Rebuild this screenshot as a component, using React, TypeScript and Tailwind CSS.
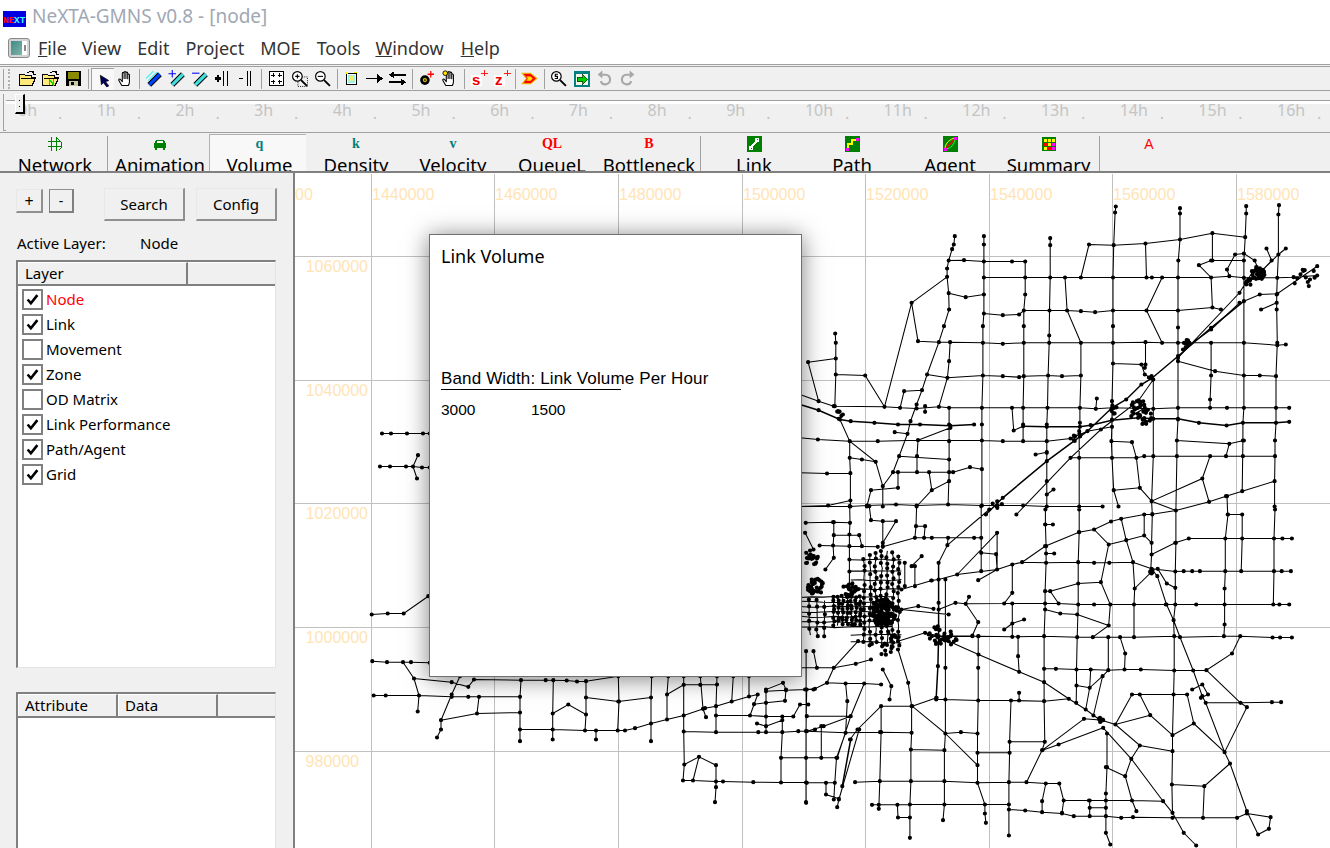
import React from "react";

type Pt = [number, number];
const T7 = (x: number, y: number): Pt => [800 + x / 2.958, 175 + y / 3];
const T8 = (x: number, y: number): Pt => [800 + x / 2.958, 510 + y / 3];
const T9 = (x: number, y: number): Pt => [295 + x / 3, 600 + y / 3];
const T10 = (x: number, y: number): Pt => [295 + x / 3, 175 + y / 3];

const A7 = [
  "458,185 455,210 450,224 440,258 435,282 435,307 440,356 441,405 426,455 411,503 376,600 361,647 345,690 327,740 318,778 293,845 275,893 245,935",
  "440,258 485,257 544,261 627,261 666,261",
  "544,185 544,210 544,261 544,309 544,360 544,417 541,455 541,505 541,603 538,700 538,750 538,798 538,884 538,993",
  "934,96 932,114 928,212 926,309 926,408 926,455 926,505 926,567 923,680 923,735 921,800 923,850 928,947 942,996",
  "1124,101 1124,117 1124,195 1119,258 1118,309 1118,408 1118,459 1118,545 1118,700 1118,735 1115,798 1115,845 1112,1008",
  "1320,95 1320,117 1317,188 1313,258 1313,310 1313,380 1313,505 1313,603 1313,700 1310,745 1310,798 1308,950",
  "1417,92 1415,120 1415,240 1412,310 1410,360 1410,405 1412,505 1408,605 1408,700 1408,745 1405,798 1405,845 1404,920 1404,996",
  "740,191 740,212 740,309 738,408 737,483 737,505 734,603 732,700 730,750 730,800 730,835 730,920 730,996",
  "666,261 666,309 666,360 662,408 662,455 662,505 662,605 660,700 660,750 660,800",
  "831,505 831,603 828,700 828,745 826,770 826,850 826,996",
  "1220,176 1220,258", "1022,207 1025,309",
  "855,210 928,212 1022,207 1124,195 1220,176 1317,188",
  "855,210 831,309",
  "544,309 666,309 740,309 784,309 831,309 926,309 1025,309 1041,309 1071,309 1118,309 1216,309 1270,305 1313,310 1412,310 1460,308 1530,303",
  "544,417 600,422 648,420 662,408 738,408 790,408 831,410 873,413 926,408 1025,408 1118,408 1220,399 1245,405",
  "784,309 790,408 831,505", "1071,309 1025,408 1071,505", "1216,309 1220,399",
  "349,500 411,503 444,503 541,505 600,508 662,505 737,505 831,505 926,505 1022,503 1071,505 1118,505 1216,505 1313,505 1412,512 1437,510",
  "1022,503 1022,570 1020,580", "926,567 1010,570 1020,600 1045,615",
  "444,503 441,560 436,610 411,697",
  "376,600 436,610 541,603 600,605 648,608 662,605 734,603 775,605 831,603",
  "1216,505 1216,603 1213,675 1213,700",
  "1118,560 1228,590 1313,603 1360,603 1408,605",
  "250,697 296,700 345,702 411,697 441,700 538,700 627,700 660,700 732,700 828,700 875,703 923,700 1045,703 1118,700 1213,700 1263,700 1313,700 1408,700 1447,700",
  "0,660 55,680 100,695 250,697",
  "104,477 106,505 106,552 106,600 103,695",
  "24,563 106,552", "24,563 55,680",
  "106,600 193,603 250,697", "250,697 330,385 349,500", "330,385 435,307", "440,356 490,368 544,360",
  "308,650 361,647", "308,650 296,700",
  "118,735 147,800 224,862 245,935", "147,800 147,850 149,896 149,978 149,996",
  "0,790 53,795 147,800 230,800 349,797 445,760",
  "349,797 538,798 600,800 660,800 730,800 800,792 850,770 923,757",
  "349,797 346,845 346,893", "293,845 441,855", "147,850 183,855 224,862", "0,895 80,897 149,896",
  "275,893 346,893 382,893 441,893 453,893 503,878 538,884",
  "290,893 290,940 210,947 198,996", "382,893 390,947 441,920 441,855", "390,947 345,996",
  "441,700 441,750 441,800 441,855 441,893 438,990",
  "0,996 83,993 149,978", "0,996 147,996 198,993 284,990 345,993 438,990 538,993 660,993 730,996 826,996 895,996",
  "245,935 245,996",
  "640,1020 800,850 890,765 1000,680 1045,615",
  "1133,525 1216,465 1300,385", "1118,550 1300,355 1340,290",
  "800,850 923,850 995,850 1018,845 1045,845 1115,845 1213,845 1260,845 1310,845 1405,845",
  "1115,798 1270,808 1260,845", "1270,808 1313,798",
  "921,800 982,803 995,850 1005,940", "1045,615 1045,703 1045,733 1045,845 1040,980 1042,1020",
  "928,947 1005,940 1040,980 1190,912 1213,845", "1190,912 1210,982",
  "1040,980 1112,1008 1210,982 1260,965 1308,950 1404,920", "1263,965 1265,1020",
  "697,840 730,833", "730,960 750,945", "632,768 660,755", "627,700 632,768", "280,773 318,778",
  "1364,405 1410,385", "1287,240 1313,237 1345,258 1360,295", "1180,272 1216,258 1313,258", "1180,272 1216,309",
  "1287,240 1263,285 1270,305", "1380,222 1395,258 1360,295 1415,240 1437,222", "1360,295 1320,330",
  "878,672 875,703", "370,695 370,712", "1000,680 1020,700 980,725",
  "1313,380 1360,360 1412,358 1530,275",
];
const T7H = [
  "0,690 55,707 118,735 150,740 220,745 290,750 355,750 445,754 515,750",
  "660,755 730,757 828,757 860,752 923,737 1000,730 1045,733 1118,733 1180,745 1262,753 1310,745 1408,745 1447,742",
  "550,1020 600,970 730,860 850,770 923,700 965,675 1010,630 1040,612 1118,545 1216,460 1313,380",
];
const A8 = [
  "147,-10 148,40 146,75 146,110 146,150 146,186 146,240", "17,40 98,38 148,40", "15,70 40,120",
  "100,38 100,77 98,108 100,145 75,180", "100,77 175,77 183,110", "58,108 146,110 230,112",
  "245,112 340,85 390,85 438,85 515,85 536,85", "205,-10 210,32 245,35 284,35 245,100", "245,35 245,110",
  "345,-10 343,50 340,85", "343,50 370,50 367,85", "438,85 436,107 410,160", "436,107 560,0",
  "536,-10 536,85 536,130 536,185", "536,130 580,134 583,180", "583,70 583,180 465,195 410,210 388,213", "583,70 465,195",
  "583,180 628,165 657,158 728,160 823,158 870,160 915,160 985,158 1040,178 1110,186 1135,185 1160,185 1183,185 1258,185 1305,185 1402,185 1425,185 1452,185",
  "527,212 583,180", "657,158 725,110 825,68 870,60 920,36 950,28 1018,15 1042,14 1112,3",
  "726,0 726,45 728,110 728,160 725,245 725,300 722,380 722,478 722,575 724,697 716,722 670,818",
  "725,45 748,45", "728,132 752,132", "826,0 826,68 823,158 823,222 823,285 820,383 818,480 818,528 817,580",
  "870,60 913,105 890,218 918,285 913,348 866,383", "913,105 965,92 1018,78 1040,100 1040,135 1037,190 990,237 988,285 988,383",
  "950,28 965,92 985,158 990,237", "1040,135 1110,100 1150,87 1258,87 1308,87 1402,87 1427,87 1455,87",
  "1112,3 1112,100 1110,186 1110,235 1110,285 1105,332 1107,380 1107,483 1102,677 1102,725 1100,825 1102,910",
  "1018,15 1018,78", "1042,14 1040,100", "1266,15 1258,87 1258,185 1256,237 1256,285 1256,345 1254,380",
  "1266,15 1308,15 1308,87 1305,185", "1405,0 1402,87 1402,185 1400,285",
  "628,165 628,250 604,282 628,282 628,342 628,382", "628,342 663,330", "604,360 628,342", "490,283 500,262",
  "410,300 460,280 490,283 604,282 725,282 765,282 823,285 870,285 918,285 988,285 1082,285 1110,285 1172,285 1256,285 1400,285 1418,285 1447,285",
  "490,283 527,338 510,378", "725,300 770,312 820,315 913,348", "740,245 823,222 890,218", "740,245 765,282", "725,245 740,245", "300,300 440,315",
  "510,380 528,380 628,382 722,380 820,383 866,383 912,383 947,383 988,383 1107,380 1124,383 1254,380 1302,380 1398,384 1420,384 1455,384",
  "1302,380 1278,432 1202,482 1163,483 1107,483 1008,480 960,480 912,482 860,480 818,480 757,478 722,478",
  "947,383 962,432 960,480", "645,382 645,440 648,487",
  "440,395 528,435 648,487 722,518 795,568 845,600 885,630 933,645 1005,708 1102,725",
  "1040,178 1057,200 1084,285 1105,332 1124,383 1163,483 1190,560 1200,580 1256,728 1272,762 1322,905 1355,975 1387,958 1392,923 1322,912",
  "1102,677 1036,617 1005,555 982,555 933,645 1036,617", "1005,555 1105,555 1145,555 1165,642 1102,677",
  "1165,642 1256,728 1322,593 1303,580 1200,580", "1303,580 1396,578 1423,578", "1202,482 1303,580",
  "1272,762 1196,830 1100,825", "1196,830 1192,925", "980,748 1005,708", "897,655 980,748 1074,875 1102,910 1135,970 1172,1008",
  "980,748 962,800 905,773", "962,800 982,873 995,905", "780,873 855,873 905,873 982,873 1074,875", "840,628 897,632",
  "717,722 840,628", "717,722 765,705 897,655", "908,672 908,773 905,852 905,920 905,970 918,1005",
  "912,383 912,482 895,500 868,618", "860,480 857,535 845,600", "818,528 857,535 895,500",
  "527,380 527,475 527,573 525,672 525,730 525,767 525,820 547,885 547,912 550,940",
  "430,210 430,475 430,570 430,672 427,722 427,815 427,885 423,932",
  "403,570 430,570 527,573 624,573 722,575 795,568", "648,550 648,573", "624,573 620,697 620,730 618,818 618,885 618,978",
  "620,697 724,697", "525,730 620,730", "525,672 476,668 430,672 332,590 240,590 240,668 236,815 233,898", "332,590 404,565",
  "330,590 330,670 328,720 328,815 325,885 325,985", "237,668 330,670", "328,720 427,722", "430,672 525,767",
  "163,818 236,815 328,815 427,815 525,820 618,818 670,818 727,822 767,822 780,873 775,910", "727,822 716,875 716,908",
  "213,886 233,886 288,886 325,885 427,885 547,885 618,885", "288,886 290,924 325,924",
  "618,900 666,903 716,908 775,912 810,920 857,920 905,920 950,925 985,923 1102,925 1192,925 1293,925 1322,912",
  "857,873 857,920", "857,895 905,895", "0,475 50,475 100,475 165,463 210,450", "100,475 80,520 40,540 15,540",
  "80,520 135,522 190,522 240,525", "135,522 140,575 135,670 108,745 103,820 100,870", "190,522 150,620 110,745",
  "240,590 170,660 148,690", "175,660 115,870 110,893", "20,620 150,620", "20,665 70,650 150,620", "20,665 135,670 240,668",
  "18,745 63,745 108,745", "63,650 63,745", "20,820 77,820 103,820", "77,820 77,855 115,868", "18,425 18,880", "40,425 50,475",
  "172,395 100,475", "330,590 320,520 290,420", "265,570 270,530 245,480", "1160,540 1190,525 1207,555 1186,565", "1058,178 1085,222 1110,235",
  "300,240 390,213", "300,300 350,290 395,298", "290,395 370,370 430,385", "330,170 360,140", "310,160 310,230", "340,170 340,230",
];
const T8H = ["410,160 410,210 410,280 410,380 408,470 403,565", "150,690 125,830", "390,380 510,380"];
const A9 = [
  "230,45 278,42 326,42 400,-10", "232,185 276,188 324,188 348,188 404,190",
  "324,188 357,237 470,248 520,262 537,240 678,242 752,242 815,243 846,246 873,245 970,230",
  "357,237 372,288 368,336", "236,288 272,288 372,288 470,292 520,292 552,292 675,292", "552,292 546,342",
  "438,362 546,342 675,339", "438,362 438,390 426,414", "438,362 470,285 495,230", "678,242 675,292 675,390 675,425",
  "675,390 773,390 870,393 903,393 968,393 990,393 1020,386 1068,372 1116,360 1166,348 1230,326 1263,320 1310,306 1362,291 1388,285",
  "775,242 773,342 773,420", "773,342 820,315 873,345", "873,245 873,294 873,345 870,393", "873,294 970,306 1068,294",
  "970,230 972,306 968,393", "1070,230 1068,294 1068,372 1068,425", "903,393 903,420", "1120,230 1116,285 1166,256 1216,256 1266,255",
  "1116,285 1116,360", "1166,230 1166,348 1166,396 1168,495 1164,543 1194,543 1263,546 1284,546 1375,548 1458,549 1533,549",
  "1168,495 1212,472 1263,497 1263,546 1263,563 1260,608", "1212,472 1194,543", "1216,230 1224,328 1233,353",
  "1266,230 1263,320 1263,348 1263,398", "1263,348 1365,348 1413,351 1462,351 1495,351 1515,315 1540,315",
  "1166,396 1263,398 1390,398 1413,398 1462,398 1510,395 1533,395 1560,390", "1315,230 1310,306", "1362,230 1362,291",
  "1388,285 1365,348", "1377,314 1413,310 1470,304 1473,270 1464,250 1413,270 1413,398", "1413,275 1473,272 1535,270 1560,268",
  "1386,372 1413,380 1462,362 1462,398 1458,475 1458,549", "1535,270 1533,395 1533,475 1533,549 1533,608", "1458,475 1533,475",
];
const A10 = ["261,777 288,777 336,777 384,777 404,777", "255,876 285,876 333,876 354,876 381,879 404,879", "369,842 354,876 366,912"];

function rng(seed: number) {
  let s = seed;
  return () => {
    s = (s * 16807) % 2147483647;
    return s / 2147483647;
  };
}

function buildNetwork() {
  const thin: Pt[][] = [];
  const thick: Pt[][] = [];
  const dots: Pt[] = [];
  const add = (arr: string[], t: (x: number, y: number) => Pt, into: Pt[][]) => {
    arr.forEach((l) => {
      const pts = l.split(" ").map((p) => {
        const [x, y] = p.split(",").map(Number);
        return t(x, y);
      });
      into.push(pts);
      dots.push(...pts);
    });
  };
  add(A7, T7, thin);
  add(T7H, T7, thick);
  add(A8, T8, thin);
  add(T8H, T8, thick);
  add(A9, T9, thin);
  add(A10, T10, thin);

  const r = rng(4711);
  const column = (x: number, top: number, bot: number, step: number, keep: number) => {
    const pts: Pt[] = [];
    for (let y = top; y <= bot; y += step) {
      const p = T8(x + (r() - 0.5) * 6, y + (r() - 0.5) * 7);
      pts.push(p);
      if (r() < keep) dots.push(p);
    }
    thin.push(pts);
  };
  for (let x = 190; x <= 296; x += 17) column(x, 118 + Math.abs(x - 250) * 0.5, 408, 19, 0.88);
  for (let x = 100; x <= 186; x += 13) column(x, 262, 352, 12, 0.98);
  for (let x = 28; x <= 90; x += 22) column(x, 270, 390, 22, 0.9);
  for (let y = 262; y <= 352; y += 15) {
    const pts: Pt[] = [];
    for (let x = 0; x <= 300; x += 34) pts.push(T8(x, y + (r() - 0.5) * 5));
    thin.push(pts);
  }
  [150, 186, 212, 240, 375, 398].forEach((y) => {
    const pts: Pt[] = [];
    for (let x = 150; x <= 300; x += 30) pts.push(T8(x, y + (r() - 0.5) * 5));
    thin.push(pts);
  });
  const blob = (cx: number, cy: number, rad: number, n: number, t: (x: number, y: number) => Pt) => {
    for (let i = 0; i < n; i++) {
      const a = r() * Math.PI * 2;
      const m = Math.sqrt(r()) * rad;
      dots.push(t(cx + Math.cos(a) * m, cy + Math.sin(a) * m));
    }
  };
  blob(245, 308, 42, 120, T8);
  blob(150, 240, 24, 22, T8);
  blob(45, 230, 26, 36, T8);
  blob(35, 145, 24, 18, T8);
  blob(250, 398, 40, 18, T8);
  blob(410, 378, 30, 20, T8);
  blob(445, 385, 22, 10, T8);
  blob(890, 632, 8, 8, T8);
  blob(1045, 190, 10, 6, T8);
  blob(1355, 297, 20, 40, T7);
  blob(1330, 325, 12, 8, T7);
  blob(1490, 305, 35, 12, T7);
  blob(1005, 700, 26, 22, T7);
  blob(1030, 735, 22, 10, T7);
  blob(925, 705, 14, 8, T7);
  blob(1145, 508, 12, 8, T7);
  blob(825, 792, 18, 7, T7);
  blob(115, 722, 14, 8, T7);
  blob(1040, 613, 10, 5, T7);
  blob(585, 990, 16, 6, T7);

  const toD = (ls: Pt[][]) =>
    ls.map((l) => "M" + l.map((p) => `${p[0].toFixed(1)} ${p[1].toFixed(1)}`).join("L")).join("");
  const R = 2.1;
  const dotD = dots
    .map((p) => `M${(p[0] - R).toFixed(1)} ${p[1].toFixed(1)}a${R} ${R} 0 1 0 ${2 * R} 0a${R} ${R} 0 1 0 ${-2 * R} 0`)
    .join("");
  return { thin: toD(thin), thick: toD(thick), dots: dotD };
}

const NET = buildNetwork();
const XL = [
  [295, "00"], [372, "1440000"], [495, "1460000"], [619, "1480000"], [743, "1500000"], [866, "1520000"],
  [990, "1540000"], [1113, "1560000"], [1237, "1580000"],
] as const;
const YL = [[256, "1060000"], [380, "1040000"], [503, "1020000"], [627, "1000000"], [751, "980000"]] as const;
const VX = [371, 494, 618, 742, 865, 989, 1112, 1236];

function MapView() {
  return (
    <svg viewBox="295 174 1035 674" className="block w-full h-full font-['Liberation_Sans',sans-serif]">
      <g stroke="#c0c0c0" strokeWidth="1" shapeRendering="crispEdges">
        {VX.map((x) => <line key={x} x1={x + 0.5} x2={x + 0.5} y1={174} y2={848} />)}
        {YL.map(([y]) => <line key={y} x1={295} x2={1330} y1={y + 0.5} y2={y + 0.5} />)}
      </g>
      <g fill="#ffe4b5" fontSize="16">
        {XL.map(([x, t]) => <text key={x} x={x} y={200}>{t}</text>)}
        {YL.map(([y, t]) => <text key={y} x={368} y={y + 16} textAnchor="end" dx={t.length === 6 ? -9 : 0}>{t}</text>)}
      </g>
      <path d={NET.thin} fill="none" stroke="#000" strokeWidth="1.05" />
      <path d={NET.thick} fill="none" stroke="#000" strokeWidth="1.5" />
      <path d={NET.dots} fill="#000" />
    </svg>
  );
}

function Ico({ children, vb = "0 0 16 16" }: { children: React.ReactNode; vb?: string }) {
  return <svg viewBox={vb} width="17" height="17" shapeRendering="crispEdges">{children}</svg>;
}

const Folder = ({ green }: { green?: boolean }) => (
  <Ico>
    <path d="M0.500 4.500h5l1 1h5v2h4l-3 7H0.500z" fill="#ffe97a" stroke="#000" strokeWidth="1" />
    <path d="M2 8h13" stroke="#000" />
    <path d="M8 3q3-3 6 0M14 1v3h2" fill="none" stroke="#000" />
    {green && <path d="M7 9v5M7 9l4 5V8" stroke="#00e000" strokeWidth="1.500" fill="none" />}
  </Ico>
);
const Save = () => (
  <Ico>
    <path d="M1 1h14v14H1z" fill="#000" />
    <path d="M3 2h10v6H3z" fill="#8a8a00" />
    <path d="M4 10h8v5H4z" fill="#c9c9a0" />
    <path d="M6 11h2v3H6z" fill="#000" />
  </Ico>
);
const Arrow = () => (
  <Ico><path d="M5 4l8 5-3 1 3 4-2 1-3-4-2 2z" fill="#00005a" stroke="#000" strokeWidth="0.6" shapeRendering="auto" /></Ico>
);
const HandI = ({ dot }: { dot?: boolean }) => (
  <svg viewBox="0 0 16 16" width="17" height="17">
    <path d="M4.5 14.5 1.8 9.8c-.6-1 .8-1.8 1.5-.9L5 11V3.2c0-1.3 1.7-1.3 1.7 0V8V2.3c0-1.3 1.7-1.3 1.7 0V8V3c0-1.3 1.7-1.3 1.7 0v5.3-3.6c0-1.3 1.6-1.3 1.6 0v6.4c0 1.6-.5 2.6-1 3.4z" fill="#fff" stroke="#000" strokeWidth="1" strokeLinejoin="round" />
    {dot && <circle cx="4" cy="3" r="2.2" fill="#ffe000" stroke="#000" strokeWidth=".8" />}
  </svg>
);
const Diag = ({ color, sign, hatch }: { color: string; sign?: string; hatch?: boolean }) => (
  <svg viewBox="0 0 16 16" width="17" height="17">
    <path d="M4 14 L14 4" stroke="#000" strokeWidth="5" />
    <path d="M4 14 L14 4" stroke={color} strokeWidth="3" />
    {hatch && <path d="M1 8 8 1M3 10l8-8" stroke="#40f0f0" strokeWidth="1" />}
    {sign === "+" && <path d="M4 0v7M0.5 3.5h7" stroke="#0000ff" strokeWidth="1" />}
    {sign === "-" && <path d="M1 3h7" stroke="#0000ff" strokeWidth="1" />}
  </svg>
);
const Bars = ({ plus }: { plus?: boolean }) => (
  <Ico>
    {plus ? <path d="M1 8h6M4 5v6" stroke="#000" strokeWidth="2" /> : <path d="M2 8h4" stroke="#000" strokeWidth="1.5" />}
    <path d={plus ? "M9 1v14M13 1v14" : "M10 1v14M13 1v14"} stroke="#000" strokeWidth="1.2" />
  </Ico>
);
const Fit = () => (
  <Ico>
    <path d="M1.500 1.500h13v13h-13z" fill="#fff" stroke="#000" strokeWidth="1.500" />
    <path d="M5 3v4M3 5h4M11 3v4M9 5h4M5 9v4M3 11h4M11 9v4M9 11h4" stroke="#000" />
  </Ico>
);
const Mag = ({ sign, box }: { sign?: string; box?: boolean }) => (
  <svg viewBox="0 0 16 16" width="17" height="17">
    {box && <rect x="6.500" y="6.500" width="9" height="9" fill="none" stroke="#000" strokeDasharray="1 1" strokeWidth=".8" />}
    <circle cx="6" cy="6" r="4.500" fill="#fff" stroke="#000" strokeWidth="1.100" />
    <path d="M9.500 9.500 15 15" stroke="#000" strokeWidth="1.800" />
    {sign === "+" && <path d="M4 6h4M6 4v4" stroke="#000" />}
    {sign === "-" && <path d="M3.500 6h5" stroke="#000" />}
    {sign === "s" && <path d="M7.500 4H5v2h2v2H4.500" fill="none" stroke="#000" strokeWidth="1.100" />}
  </svg>
);
const NodeSq = () => (
  <Ico>
    <path d="M3 3h10v11H3z" fill="#fff" stroke="#000" />
    <path d="M5 5h6v7H5z" fill="#a0f0f0" />
    <path d="M6 6h4v4H6z" fill="#f0f060" />
    <path d="M2 2l3 2M10 2h3" stroke="#f0f000" />
  </Ico>
);
const ArrR = () => <Ico><path d="M0 8h11" stroke="#000" strokeWidth="1.400" /><path d="M10 3.500 16 8l-6 4.500z" fill="#000" /></Ico>;
const ArrLR = () => (
  <Ico>
    <path d="M4 4.500h12M0 11.500h12" stroke="#000" strokeWidth="1.400" />
    <path d="M5 1 0 4.500 5 8zM11 8l5 3.500-5 3.500z" fill="#000" />
  </Ico>
);
const NodePlus = () => (
  <svg viewBox="0 0 16 16" width="17" height="17">
    <circle cx="6.500" cy="9.500" r="4.500" fill="#000" />
    <circle cx="6.500" cy="9.500" r="2" fill="#e0c000" />
    <circle cx="6.500" cy="9.500" r=".8" fill="#000" />
    <path d="M12 1v6M9 4h6" stroke="#ff0000" strokeWidth="1.200" />
  </svg>
);
const Letter = ({ t }: { t: string }) => (
  <span className="relative block w-[17px] h-[17px] font-['Liberation_Sans',sans-serif] font-bold text-[#f00000] text-[15px] leading-[20px] pl-[2px]">
    <i className="absolute left-[1px] top-[5px] w-[11px] h-[11px] bg-white" />
    <span className="relative">{t}</span>
    <svg viewBox="0 0 8 8" width="7" height="7" className="absolute right-[-1px] top-[0px]" shapeRendering="crispEdges">
      <path d="M4 0v7M0 3.500h8" stroke="#ff0000" strokeWidth="1" />
    </svg>
  </span>
);
const RedArrow = () => (
  <svg viewBox="0 0 16 16" width="17" height="17">
    <path d="M1 3h8l6 5-6 5H1l4-5z" fill="#ff0000" stroke="#e8c000" strokeWidth="1" />
    <path d="M5 6h4l2 2-2 2H5l1.500-2z" fill="#ffe000" />
  </svg>
);
const ExitI = () => (
  <Ico>
    <path d="M1 1h15v15H1z" fill="#008080" />
    <path d="M3 4h11v10H3z" fill="#f4f4e8" />
    <path d="M4 7h5V4l5 5-5 5v-3H4z" fill="#00d000" stroke="#004000" strokeWidth=".7" />
  </Ico>
);
const Turn = ({ flip }: { flip?: boolean }) => (
  <svg viewBox="0 0 16 16" width="17" height="17" className={flip ? "-scale-x-100" : ""}>
    <path d="M5 4.500h4a4.500 4.500 0 1 1-4.500 6" fill="none" stroke="#a8a8a8" strokeWidth="2" />
    <path d="M6 .500v7.500L1.500 4.200z" fill="#a8a8a8" />
  </svg>
);

function Tool({ children, pressed }: { children: React.ReactNode; pressed?: boolean }) {
  return (
    <div className={`w-[23px] h-[22px] flex items-center justify-center ${pressed ? "bg-[#f8f8f8] border-t border-l border-[#a0a0a0]" : ""}`}>
      {children}
    </div>
  );
}
function Sep({ w = "w-[6px]" }: { w?: string }) {
  return <div className={`${w} h-[20px] flex justify-center`}><div className="w-px h-full bg-[#a0a0a0]" /></div>;
}

function Toolbar() {
  return (
    <div className="h-[24px] flex items-center border-b border-[#a0a0a0] bg-[#f0f0f0] relative">
      <div className="w-[3px] h-full" />
      <div className="w-px h-[20px] bg-[#a0a0a0]" />
      <div className="w-[8px] h-[20px] ml-[4px] border-l-2 border-dotted border-[#b0b0b0]" />
      <Tool><Folder /></Tool>
      <Tool><Folder green /></Tool>
      <Tool><Save /></Tool>
      <Sep />
      <Tool pressed><Arrow /></Tool>
      <Tool><HandI /></Tool>
      <Sep w="w-[5px]" />
      <Tool><Diag color="#0040ff" hatch /></Tool>
      <Tool><Diag color="#40e0e0" sign="+" /></Tool>
      <Tool><Diag color="#40e0e0" sign="-" /></Tool>
      <Tool><Bars plus /></Tool>
      <Tool><Bars /></Tool>
      <Sep w="w-[8px]" />
      <Tool><Fit /></Tool>
      <Tool><Mag sign="+" box /></Tool>
      <Tool><Mag sign="-" /></Tool>
      <Sep />
      <Tool><NodeSq /></Tool>
      <Tool><ArrR /></Tool>
      <Tool><ArrLR /></Tool>
      <Sep />
      <Tool><NodePlus /></Tool>
      <Tool><HandI dot /></Tool>
      <Sep />
      <Tool><Letter t="s" /></Tool>
      <Tool><Letter t="z" /></Tool>
      <Sep w="w-[5px]" />
      <Tool><RedArrow /></Tool>
      <Sep w="w-[6px]" />
      <Tool><Mag sign="s" /></Tool>
      <Tool><ExitI /></Tool>
      <Tool><Turn /></Tool>
      <Tool><Turn flip /></Tool>
    </div>
  );
}

function Slider() {
  const hours = Array.from({ length: 17 }, (_, i) => i);
  return (
    <div className="h-[42px] relative bg-[#f0f0f0] border-b border-[#a0a0a0] overflow-hidden">
      <div className="absolute left-[3px] top-[3px] w-[3px] h-[37px] border-l border-b border-[#a0a0a0]" />
      <div className="ml-[6px] mt-[9px] h-[3px] bg-white border-t border-[#a0a0a0] box-content" />
      <div className="flex pl-[18px] text-[16px] leading-[18px] text-[#c4c4c4] mt-[-3px] whitespace-nowrap">
        {hours.map((h) => (
          <React.Fragment key={h}>
            <span className="w-[40px] shrink-0">{h}h</span>
            <span className="w-[38.700px] shrink-0 pt-[3px]">.</span>
          </React.Fragment>
        ))}
      </div>
      <div className="absolute left-[15px] top-[3px] w-[10px] h-[20px] bg-[#f0f0f0] border-t border-l border-white border-r-2 border-b-2 border-r-black border-b-black flex flex-col items-center justify-center gap-[5px]">
        <i className="block w-px h-px bg-black" />
        <i className="block w-px h-px bg-black" />
      </div>
    </div>
  );
}

const Serif = ({ t, c }: { t: string; c: string }) => (
  <span className={`font-['Liberation_Serif',serif] font-bold text-[14px] leading-[16px] ${c}`}>{t}</span>
);

const Square = ({ children }: { children: React.ReactNode }) => (
  <svg viewBox="0 0 16 16" width="16" height="16" shapeRendering="crispEdges">{children}</svg>
);

const TABS: { label: string; cls: string; icon: React.ReactNode; pressed?: boolean; sep?: boolean }[] = [
  { label: "Network", cls: "w-[102px] pr-[4px]", sep: true, icon: (
    <Square><path d="M1 5h12M1 10h14M4 1v14M9 1v14M9 1l5 5v6l-2 2" fill="none" stroke="#008000" /></Square>) },
  { label: "Animation", cls: "w-[101px] pl-[3px]", icon: (
    <Square><path d="M4 4h8l2 4v4H2V8z" fill="#008000" /><path d="M5 5h6v2H5z" fill="#fff" /><path d="M3 12h2v2H3zM11 12h2v2h-2z" fill="#008000" /></Square>) },
  { label: "Volume", cls: "w-[97px] pl-[3px]", pressed: true, icon: <Serif t="q" c="text-[#008080]" /> },
  { label: "Density", cls: "w-[100px]", icon: <Serif t="k" c="text-[#008080]" /> },
  { label: "Velocity", cls: "w-[94px]", icon: <Serif t="v" c="text-[#008080]" /> },
  { label: "QueueL", cls: "w-[104px]", icon: <Serif t="QL" c="text-[#ff0000]" /> },
  { label: "Bottleneck", cls: "w-[97px] pr-[7px]", sep: true, icon: <Serif t="B" c="text-[#ff0000]" /> },
  { label: "Link", cls: "w-[106px]", icon: (
    <Square><path d="M1 0h15v16H1z" fill="#008000" /><path d="M5 11l6-6" stroke="#fff" strokeWidth="2.500" /><path d="M3 10h4v4H3zM9 2h4v4H9z" fill="#fff" /><path d="M5 12h1v1H5zM11 3h1v1h-1z" fill="#008000" /></Square>) },
  { label: "Path", cls: "w-[90px]", icon: (
    <Square><path d="M1 0h15v16H1z" fill="#008000" /><path d="M4 13V8h4V4h5" stroke="#ffff00" strokeWidth="1.500" fill="none" /><path d="M2 12h3v3H2zM12 2h3v3h-3z" fill="#ff00ff" /></Square>) },
  { label: "Agent", cls: "w-[106px]", icon: (
    <svg viewBox="0 0 16 16" width="16" height="16"><path d="M1 0h15v16H1z" fill="#008000" /><path d="M3 13C3 7 8 3 13 2" stroke="#ffff00" fill="none" /><path d="M3 13C9 13 13 8 13 2" stroke="#00ff40" fill="none" /><path d="M4 12l8-8" stroke="#ff0000" strokeWidth="1.500" /><path d="M2 12h3v3H2zM12 1h3v3h-3z" fill="#ff00ff" /></svg>) },
  { label: "Summary", cls: "w-[97px] pr-[6px]", sep: true, icon: (
    <Square><path d="M1 1h14v14H1z" fill="#008000" /><path d="M3 3h3v3H3zM7 3h3v3H7zM11 3h3v3h-3zM7 7h3v3H7zM3 11h3v3H3z" fill="#ffff00" /><path d="M3 7h3v3H3zM7 11h3v3H7z" fill="#ff0000" /><path d="M11 7h3v3h-3zM11 11h3v3h-3z" fill="#ff00ff" /></Square>) },
  { label: "", cls: "w-[98px]", icon: <span className="font-['Liberation_Sans',sans-serif] text-[14px] leading-[16px] text-[#ff0000]">A</span> },
];

function Tabs() {
  return (
    <div className="h-[40px] flex bg-[#f0f0f0] border-b-2 border-[#808080] pl-[6px] overflow-hidden text-[18.500px]">
      {TABS.map((t) => (
        <div key={t.cls + t.label} className={`${t.cls} shrink-0 relative flex flex-col items-center ${t.pressed ? "bg-[#f8f8f8] border-t border-l border-[#b0b0b0] mt-[1px] pt-[1px]" : "pt-[3px]"}`}>
          {t.sep && <i className="absolute right-0 top-[3px] bottom-0 w-px bg-[#a0a0a0]" />}
          <div className="h-[16px] flex items-center justify-center">{t.icon}</div>
          <div className="text-black leading-[24px] mt-[1px] whitespace-nowrap">{t.label}</div>
        </div>
      ))}
    </div>
  );
}

const raised = "bg-[#f0f0f0] border-t border-l border-[#e8e8e8] border-r-2 border-b-2 border-r-[#909090] border-b-[#909090] flex items-center justify-center text-black";

function Check({ on }: { on: boolean }) {
  return (
    <div className="w-[21px] h-[21px] shrink-0 bg-white border-2 border-[#808080] flex items-center justify-center">
      {on && (
        <svg viewBox="0 0 12 12" width="13" height="13">
          <path d="M1.500 6 4.500 9.500 10.500 2" fill="none" stroke="#000" strokeWidth="2.400" />
        </svg>
      )}
    </div>
  );
}

const LAYERS: [string, boolean][] = [
  ["Node", true], ["Link", true], ["Movement", false], ["Zone", true], ["OD Matrix", false],
  ["Link Performance", true], ["Path/Agent", true], ["Grid", true],
];

function HeadCell({ t, w }: { t: string; w: string }) {
  return (
    <div className={`${w} h-full bg-[#f0f0f0] border-t border-l border-white border-r-2 border-r-[#808080] pl-[6px] text-[15px] leading-[21px] text-black`}>
      {t}
    </div>
  );
}

function Sidebar() {
  return (
    <aside className="w-[295px] shrink-0 h-full bg-[#f0f0f0] border-r-2 border-[#808080] text-[15px] text-black overflow-hidden">
      <div className="flex items-start pl-[16px] pt-[15px]">
        <button className={`${raised} w-[27px] h-[24px] text-[16px] mt-[1px]`}>+</button>
        <button className={`${raised} w-[25px] h-[24px] ml-[6px] mt-[1px] !border-[#808080] !border-t-[#909090] text-[14px]`}>-</button>
        <button className={`${raised} w-[81px] h-[33px] ml-[30px] text-[15px]`}>Search</button>
        <button className={`${raised} w-[81px] h-[33px] ml-[11px] text-[15px]`}>Config</button>
      </div>
      <div className="flex pl-[17px] mt-[11px] h-[22px] leading-[22px]">
        <span className="w-[123px]">Active Layer:</span>
        <span>Node</span>
      </div>
      <div className="ml-[16px] mt-[6px] w-[260px] h-[408px] bg-white border-t-2 border-l-2 border-[#808080] border-r border-b border-r-[#e4e4e4] border-b-[#e4e4e4]">
        <div className="h-[22px] flex border-b-2 border-[#808080] box-content bg-[#f0f0f0]">
          <HeadCell t="Layer" w="w-[170px]" />
          <div className="flex-1 border-t border-white" />
        </div>
        <div className="pl-[4px] pt-[1px]">
          {LAYERS.map(([name, on], i) => (
            <div key={name} className="h-[25px] flex items-center gap-[3px]">
              <Check on={on} />
              <span className={i === 0 ? "text-[#ff0000]" : ""}>{name}</span>
            </div>
          ))}
        </div>
      </div>
      <div className="ml-[16px] mt-[24px] w-[260px] h-[200px] bg-white border-t-2 border-l-2 border-[#808080] border-r border-r-[#e4e4e4]">
        <div className="h-[22px] flex border-b-2 border-[#808080] box-content bg-[#f0f0f0]">
          <HeadCell t="Attribute" w="w-[100px]" />
          <HeadCell t="Data" w="w-[100px]" />
          <div className="flex-1 border-t border-white" />
        </div>
      </div>
    </aside>
  );
}

function Dialog() {
  return (
    <div className="absolute left-[134px] top-[61px] w-[373px] h-[443px] bg-white border border-[#707070] shadow-[0_2px_22px_rgba(0,0,0,0.5)] pl-[11px] text-black">
      <div className="text-[18px] leading-[24px] mt-[9px]">Link Volume</div>
      <div className="mt-[101px] font-['Liberation_Sans',sans-serif] text-[17px] leading-[20px] tracking-[0.15px]">Band Width: Link Volume Per Hour</div>
      <div className="w-[180px] h-[1px] bg-black mt-[0px]" />
      <div className="flex mt-[10px] font-['Liberation_Sans',sans-serif] text-[15.500px] leading-[20px]">
        <span className="w-[90px]">3000</span>
        <span>1500</span>
      </div>
    </div>
  );
}

function Menu() {
  const cls = "text-[18px]";
  return (
    <div className="h-[32px] flex items-center bg-white text-[#333333] whitespace-nowrap relative">
      <div className="ml-[8px] w-[22px] h-[20px] rounded-[3px] bg-[#d4d4d4] border border-[#8a8a8a] p-[2px] flex">
        <div className="w-[11px] h-full bg-gradient-to-br from-[#3e8a88] to-[#7fb4a8]" />
        <div className="flex-1 bg-white flex items-center justify-center"><i className="block w-[2px] h-[6px] bg-[#8a8a8a]" /></div>
      </div>
      <span className={`${cls} ml-[8px]`}><u>F</u>ile</span>
      <span className={`${cls} ml-[15px]`}>View</span>
      <span className={`${cls} ml-[16px]`}>Edit</span>
      <span className={`${cls} ml-[16px]`}>Project</span>
      <span className={`${cls} ml-[16px]`}>MOE</span>
      <span className={`${cls} ml-[16px]`}>Tools</span>
      <span className={`${cls} ml-[15px]`}><u>W</u>indow</span>
      <span className={`${cls} ml-[17px]`}><u>H</u>elp</span>
    </div>
  );
}

export default function App() {
  return (
    <div className="w-[1330px] h-[848px] overflow-hidden flex flex-col bg-white font-['Noto_Sans',sans-serif]">
      <div className="h-[32px] flex items-center bg-white shrink-0">
        <svg viewBox="0 0 23 16" width="23" height="16" className="ml-[3px] mt-[5px] font-['Liberation_Mono',monospace]">
          <rect width="23" height="16" fill="#0000e0" />
          <text x="0" y="12" fontSize="9.500" fontWeight="700" fill="#ff0000">NE</text>
          <text x="11" y="12" fontSize="9.500" fontWeight="700" fill="#40ffff">XT</text>
        </svg>
        <span className="ml-[6px] text-[19px] leading-[28px] text-[#a0a8b4] whitespace-nowrap">NeXTA-GMNS v0.8 - [node]</span>
      </div>
      <Menu />
      <div className="h-px bg-[#a0a0a0] shrink-0" />
      <div className="h-px bg-[#f0f0f0] shrink-0" />
      <div className="h-px bg-[#a0a0a0] shrink-0" />
      <Toolbar />
      <Slider />
      <Tabs />
      <div className="flex-1 min-h-0 flex">
        <Sidebar />
        <div className="flex-1 relative overflow-hidden bg-white">
          <MapView />
          <Dialog />
        </div>
      </div>
    </div>
  );
}
